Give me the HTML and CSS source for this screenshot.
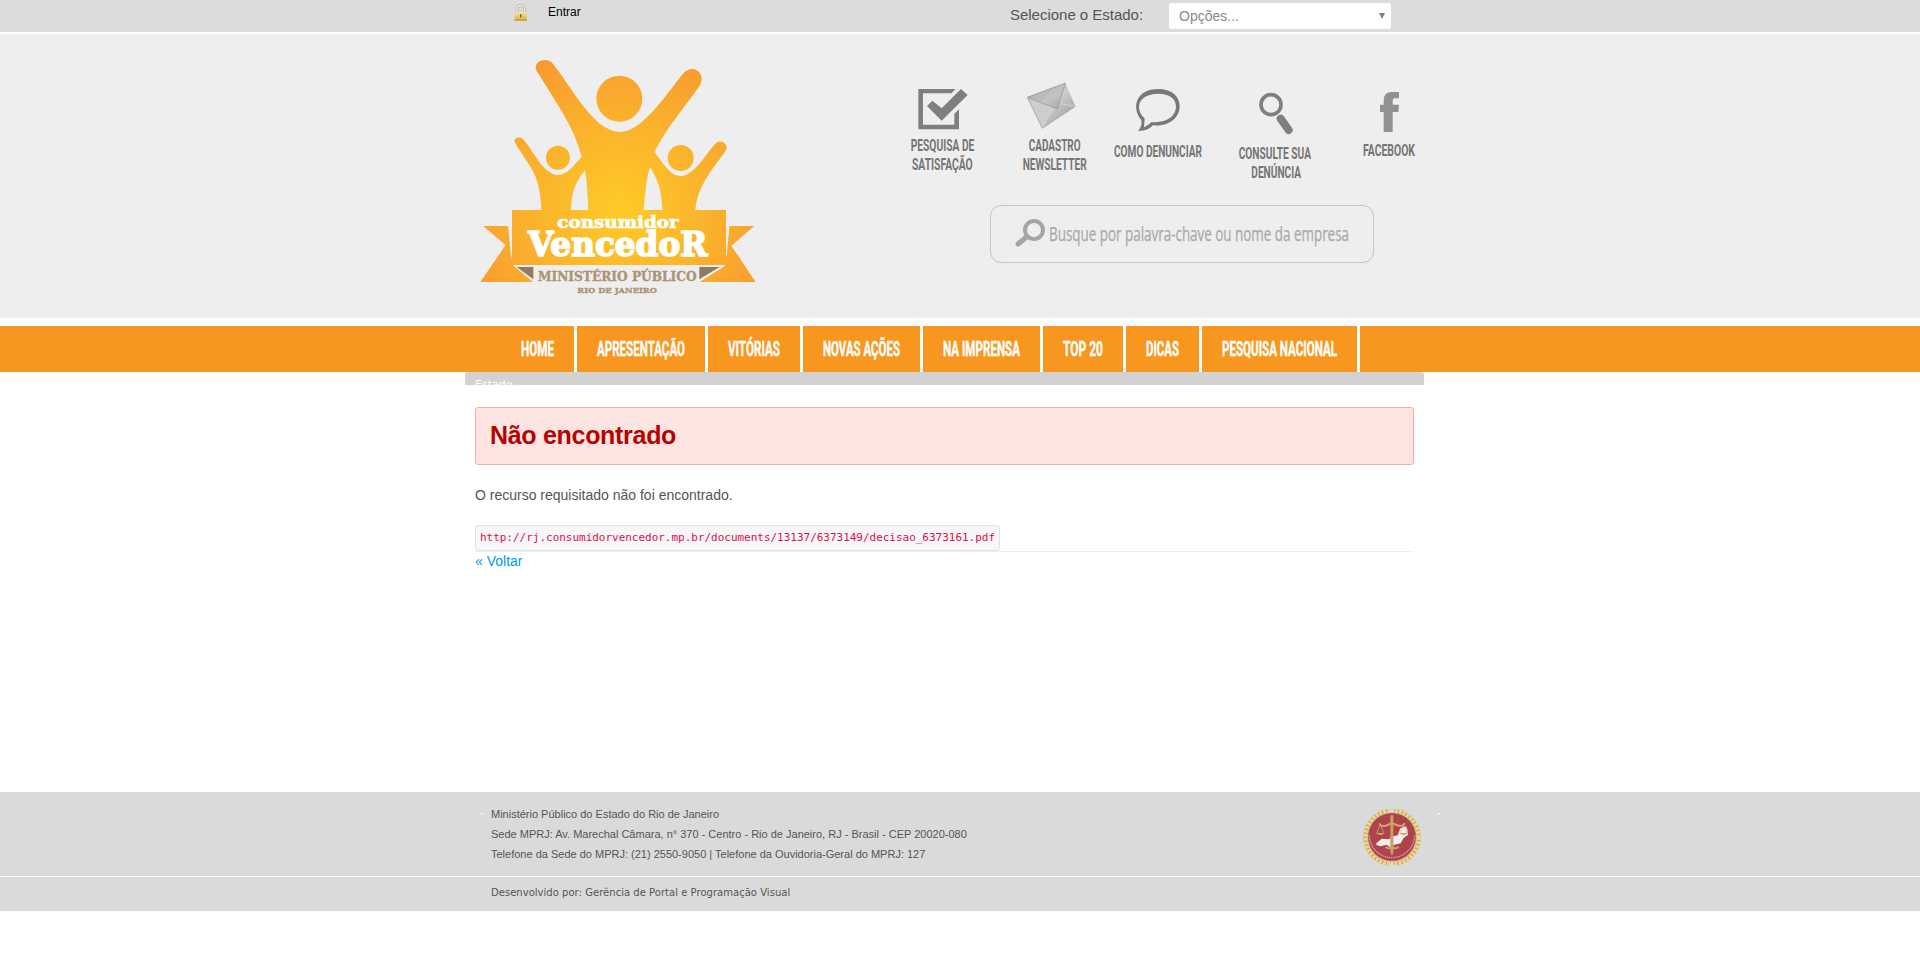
FILE: index.html
```html
<!DOCTYPE html>
<html lang="pt-BR">
<head>
<meta charset="utf-8">
<title>Consumidor Vencedor</title>
<link rel="stylesheet" href="styles.css">
</head>
<body>
<div class="topbar">
  <svg class="lock" width="14" height="17" viewBox="0 0 14 17">
    <defs><linearGradient id="gold" x1="0" y1="0" x2="0" y2="1"><stop offset="0" stop-color="#f6e6ae"/><stop offset="1" stop-color="#d8ad33"/></linearGradient></defs>
    <path d="M3 9V5.500a3.800 4 0 0 1 7.600 0V9" fill="none" stroke="#a3a39e" stroke-width="2.800"/>
    <path d="M3 9V5.500a3.800 4 0 0 1 7.600 0V9" fill="none" stroke="#fafafa" stroke-width="1.300"/>
    <rect x=".5" y="8" width="12.500" height="8.500" rx="1" fill="url(#gold)"/>
    <path d="M.5 16.200h12.500" stroke="#b08a2c" stroke-width=".8"/>
    <path d="M6.700 10.200v3" stroke="#6b5216" stroke-width="1.300"/>
  </svg>
  <a class="login">Entrar</a>
  <label class="state-label">Selecione o Estado:</label>
  <div class="state-select"><span>Opções...</span><i></i></div>
</div>

<header class="header">
  <svg class="logo" width="300" height="284" viewBox="0 102 900 852">
    <defs><radialGradient id="sun" gradientUnits="userSpaceOnUse" cx="448" cy="630" r="500"><stop offset="0" stop-color="#fecb26"/><stop offset=".5" stop-color="#fbb42c"/><stop offset="1" stop-color="#f89a30"/></radialGradient></defs>
    <g fill="url(#sun)">
      <circle cx="448" cy="296" r="69"/>
      <circle cx="264" cy="473" r="36"/>
      <circle cx="632" cy="474" r="39"/>
      <path d="M200 213C185 184 232 167 250 193C310 270 375 396 449 396C515 396 583 291 638 222C668 186 711 220 689 257C642 325 588 384 553 457C580 490 600 528 632 528C673 525 699 474 735 432C752 413 780 432 766 454C728 507 681 560 676 631H578C573 565 565 543 540 501C527 545 525 590 521 631H355C353 590 351 545 345 511C311 555 306 579 303 631H214C213 583 204 535 183 503L137 432C124 411 155 407 162 421C195 460 222 525 264 525C293 524 312 494 335 471C313 384 267 323 241 278Z"/>
      <path d="M126 630H768V795H126Z"/>
      <path d="M39 678H116L125 775L131 797L189 846H31L107 735Z"/>
      <path d="M853 678H777L768 775L764 797L688 846H857L784 737Z"/>
    </g>
    <path d="M116 677L124 765M777 677L769 765" stroke="#eee" stroke-width="3"/>
    <path d="M131 797H765L688 846V799H190V841Z" fill="#eee"/>
    <path d="M140 801H190V838Z" fill="#927a62"/><path d="M749 801H688V838Z" fill="#927a62"/>
    <g class="slab">
      <text x="262" y="685" font-size="50" textLength="364" lengthAdjust="spacingAndGlyphs" fill="#fff" stroke="#fff" stroke-width="2">consumidor</text>
      <text x="174" y="768" font-size="98" textLength="538" lengthAdjust="spacingAndGlyphs" fill="#fff" stroke="#fff" stroke-width="5">VencedoR</text>
      <text x="204" y="843" font-size="38" textLength="476" lengthAdjust="spacingAndGlyphs" fill="#ad9274" stroke="#ad9274">MINISTÉRIO PÚBLICO</text>
      <text x="322" y="878" font-size="24" textLength="239" lengthAdjust="spacingAndGlyphs" fill="#ad9274" stroke="#ad9274">RIO DE JANEIRO</text>
    </g>
  </svg>

  <div class="tools">
    <div class="links">
      <svg class="link" width="72" height="96" viewBox="48 24 216 288">
        <path d="M85 57H197L184 70H99V164H193V131L207 118V178H85Z" fill="#7f7f7f"/>
        <path d="M111 108L127 92L155 115L213 57L233 75L155 152Z" fill="#7f7f7f"/>
        <text x="62" y="242" textLength="191" lengthAdjust="spacingAndGlyphs">PESQUISA DE</text>
        <text x="66" y="300" textLength="182" lengthAdjust="spacingAndGlyphs">SATISFAÇÃO</text>
      </svg>
      <svg class="link news" width="74" height="96" viewBox="384 24 222 288">
        <defs><linearGradient id="paper" x1="0" y1="0" x2="1" y2="1"><stop offset="0" stop-color="#999"/><stop offset=".5" stop-color="#ccc"/><stop offset="1" stop-color="#909090"/></linearGradient>
        <linearGradient id="flap" x1="0" y1="0" x2="1" y2="1"><stop offset="0" stop-color="#a2a2a2"/><stop offset=".6" stop-color="#c4c4c4"/><stop offset="1" stop-color="#a0a0a0"/></linearGradient></defs>
        <path d="M412 82L526 39L556 109L457 175Z" fill="url(#paper)"/>
        <path d="M414 84L490 112L457 173Z" fill="#cdcdcd"/>
        <path d="M412 82L526 39L502 117Z" fill="url(#flap)" stroke="#949494" stroke-width="2"/>
        <path d="M457 174L490 114M512 101L555 109" stroke="#e2e2e2" stroke-width="2"/>
        <path d="M412 82L457 175L556 109" fill="none" stroke="#999" stroke-width="2"/>
        <text x="416" y="242" textLength="156" lengthAdjust="spacingAndGlyphs">CADASTRO</text>
        <text x="398" y="300" textLength="192" lengthAdjust="spacingAndGlyphs">NEWSLETTER</text>
      </svg>
      <svg class="link report" width="96" height="96" viewBox="660 24 288 288">
        <path fill-rule="evenodd" fill="#787878" d="M744 183C754 172 756 161 754 150C724 115 736 57 805 57C848 57 869 82 869 108C869 147 832 170 789 166C776 179 762 183 744 183ZM762 172C770 168 777 163 785 156C828 160 858 140 858 109C858 86 838 71 805 71C746 71 732 115 764 145Z"/>
        <text x="672" y="261" textLength="264" lengthAdjust="spacingAndGlyphs">COMO DENUNCIAR</text>
      </svg>
      <svg class="link consult" width="78" height="96" viewBox="168 24 234 288">
        <circle cx="273" cy="104" r="30" fill="none" stroke="#7f7f7f" stroke-width="11"/>
        <path d="M302 146L326 180" stroke="#7f7f7f" stroke-width="24" stroke-linecap="round"/>
        <text x="176" y="266" textLength="217" lengthAdjust="spacingAndGlyphs">CONSULTE SUA</text>
        <text x="214" y="325" textLength="149" lengthAdjust="spacingAndGlyphs">DENÚNCIA</text>
      </svg>
      <svg class="link face" width="58" height="96" viewBox="540 24 174 288">
        <path d="M611 186V126H600V104H611V91Q612 66 635 66H657V85H645Q638 85 638 92V104H657L655 126H638V186Z" fill="#919191"/>
        <text x="549" y="259" textLength="156" lengthAdjust="spacingAndGlyphs">FACEBOOK</text>
      </svg>
    </div>
    <div class="search">
      <svg width="381" height="56" viewBox="0 0 381 56">
        <circle cx="43" cy="24" r="9" fill="none" stroke="#a3a5a8" stroke-width="4"/>
        <path d="M35.500 31L27 38" stroke="#a3a5a8" stroke-width="5" stroke-linecap="round"/>
        <text x="58" y="35" textLength="300" lengthAdjust="spacingAndGlyphs">Busque por palavra-chave ou nome da empresa</text>
      </svg>
    </div>
  </div>
</header>

<nav class="nav">
  <a><svg width="33" height="46"><text y="30" textLength="33" lengthAdjust="spacingAndGlyphs">HOME</text></svg></a>
  <a><svg width="88" height="46"><text y="30" textLength="88" lengthAdjust="spacingAndGlyphs">APRESENTAÇÃO</text></svg></a>
  <a><svg width="52" height="46"><text y="30" textLength="52" lengthAdjust="spacingAndGlyphs">VITÓRIAS</text></svg></a>
  <a><svg width="77" height="46"><text y="30" textLength="77" lengthAdjust="spacingAndGlyphs">NOVAS AÇÕES</text></svg></a>
  <a><svg width="77" height="46"><text y="30" textLength="77" lengthAdjust="spacingAndGlyphs">NA IMPRENSA</text></svg></a>
  <a><svg width="40" height="46"><text y="30" textLength="40" lengthAdjust="spacingAndGlyphs">TOP 20</text></svg></a>
  <a><svg width="33" height="46"><text y="30" textLength="33" lengthAdjust="spacingAndGlyphs">DICAS</text></svg></a>
  <a><svg width="115" height="46"><text y="30" textLength="115" lengthAdjust="spacingAndGlyphs">PESQUISA NACIONAL</text></svg></a>
</nav>
<div class="crumb">Estado</div>

<main class="content">
  <h3 class="alert">Não encontrado</h3>
  <p class="message">O recurso requisitado não foi encontrado.</p>
  <code class="url">http://rj.consumidorvencedor.mp.br/documents/13137/6373149/decisao_6373161.pdf</code>
  <div class="rule"></div>
  <a class="back">« Voltar</a>
</main>

<footer class="footer">
  <div class="address">
    <i class="dot"></i>
    <div class="lines">
      <p>Ministério Público do Estado do Rio de Janeiro</p>
      <p>Sede MPRJ: Av. Marechal Câmara, n° 370 - Centro - Rio de Janeiro, RJ - Brasil - CEP 20020-080</p>
      <p>Telefone da Sede do MPRJ: (21) 2550-9050 | Telefone da Ouvidoria-Geral do MPRJ: 127</p>
    </div>
    <svg class="seal" width="60" height="60" viewBox="66 84 180 180">
      <circle cx="156" cy="172" r="80" fill="none" stroke="#c9a95c" stroke-width="12"/>
      <circle cx="156" cy="172" r="80" fill="none" stroke="#efd98c" stroke-width="11" stroke-dasharray="8 4"/>
      <path d="M149 86H163L160 104H152ZM145 260L156 244L167 260Z" fill="#dadada"/>
      <circle cx="156" cy="171" r="73" fill="#ae434c" stroke="#d8d0c4" stroke-width="2"/>
      <path d="M88 165A68 68 0 0 0 224 165" fill="none" stroke="#d9a3a5" stroke-width="4" stroke-dasharray="4 2"/>
      <path d="M109 190L125 176L146 178L159 169L173 166L181 145L198 139L202 148L204 164L191 174L182 190L164 194L150 201L139 194L121 199L109 195Z" fill="#f1eeee"/>
      <path d="M151 106H160V218L156 227L151 218Z" fill="#c6a060"/>
      <path d="M119 130Q120 140 137 137L156 130L176 137Q192 139 193 129M136 201Q145 208 156 202Q168 208 176 200" fill="none" stroke="#cfa663" stroke-width="6"/>
      <path d="M120 136L110 160M122 136L132 160M190 136L180 160M192 136L202 160" stroke="#d9b77a" stroke-width="2"/>
      <path d="M108 159H134Q121 172 108 159M178 159H204Q191 172 178 159" fill="#cfa663"/>
    </svg>
    <i class="dot end"></i>
  </div>
  <div class="credits"><span>Desenvolvido por: Gerência de Portal e Programação Visual</span></div>
</footer>
</body>
</html>
```
FILE: styles.css
```css
* { box-sizing: border-box; }
body { margin: 0; background: #fff; color: #555; font-family: "Liberation Sans", Arial, sans-serif; }
p, h3 { margin: 0; }
svg { display: block; flex: none; overflow: visible; }

.topbar { display: flex; align-items: flex-start; height: 34px; background: #dcdcdc; border-bottom: 2px solid #fff; padding-left: 514px; }
.lock { margin-top: 4px; }
.login { width: 462px; margin-left: 20px; padding-top: 5px; font-size: 12px; line-height: 14px; color: #000; }
.state-label { width: 159px; padding-top: 6px; font-size: 15px; line-height: 18px; letter-spacing: -.02px; white-space: nowrap; }
.state-select { display: flex; align-items: center; justify-content: space-between; width: 222px; height: 26px; margin-top: 3px; padding: 0 6px 0 10px; background: #fff; border-radius: 2px; color: #888; font-size: 14px; }
.state-select i { border: 3.500px solid transparent; border-top: 6px solid #7d7d7d; border-bottom: 0; }

.header { display: flex; height: 284px; background: #eee; padding-left: 470px; }
.slab { font-family: "DejaVu Serif", serif; font-weight: bold; }
.tools { margin-left: 136px; padding-top: 44px; }
.links { display: flex; }
.link { font-family: Roboto, sans-serif; font-weight: 700; font-size: 50px; fill: #757575; }
.news { margin-left: 40px; }
.report { margin-left: 18px; }
.consult { margin-left: 30px; }
.face { margin-left: 46px; }
.search { width: 384px; height: 58px; margin: 31px 0 0 84px; border: 1px solid #c6c6c6; border-radius: 11px; font-family: "Open Sans", "Noto Sans", sans-serif; font-size: 19.500px; fill: #a7a9ac; stroke: #a7a9ac; stroke-width: .25px; }

.nav { display: flex; height: 46px; margin-top: 8px; padding-left: 501px; background: #f8971f; }
.nav a { padding: 0 20px; border-right: 3px solid #fff; font-family: Roboto, sans-serif; font-size: 19.700px; font-weight: 700; fill: #fff; stroke: #fff; stroke-width: .4px; }

.crumb { width: 959px; height: 13px; margin-left: 465px; padding: 5px 10px 0; overflow: hidden; background: #d2d2d2; border-radius: 3px 3px 0 0; color: #fff; font: 11px/15px "DejaVu Sans", Verdana, sans-serif; }

.content { display: flex; flex-direction: column; align-items: flex-start; width: 939px; height: 407px; margin-left: 475px; padding-top: 22px; }
.alert { align-self: stretch; height: 58px; padding: 12px 14px; background: #fee4e1; border: 1px solid #f9aca6; border-radius: 3px; color: #b50303; font-size: 25px; line-height: 30px; letter-spacing: -.3px; }
.message { margin-top: 21px; font-size: 14px; line-height: 18px; }
.url { height: 26px; margin-top: 21px; padding: 4px 4px; background: #f7f7f9; border: 1px solid #e1e1e8; border-radius: 3px; color: #d14; font: 11px/15px "DejaVu Sans Mono", monospace; letter-spacing: -.02px; white-space: nowrap; }
.rule { width: 100%; height: 1px; background: #eee; }
.back { color: #009ae5; font-size: 14px; line-height: 18px; }

.footer { height: 119px; background: #dadada; }
.address { display: flex; height: 85px; padding-left: 481px; border-bottom: 1px solid #fff; }
.dot { width: 2px; height: 1px; margin-top: 21px; background: #fff; }
.lines { width: 879px; padding: 12px 0 0 8px; font-size: 11px; line-height: 20px; white-space: nowrap; }
.seal { margin-top: 16px; }
.dot.end { margin-left: 16px; }
.credits { padding: 8px 0 0 491px; font: 10px/16px "DejaVu Sans", Verdana, sans-serif; letter-spacing: .03px; }
```
